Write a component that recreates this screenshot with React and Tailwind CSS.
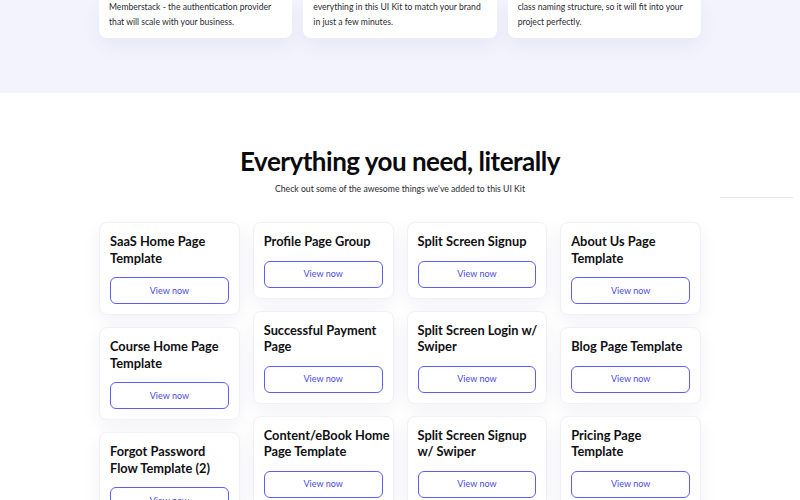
import { Fragment } from "react";

/* ---- feature blurbs (tail end of the previous section) ---- */
const features = [
  ["Memberstack - the authentication provider", "that will scale with your business."],
  ["everything in this UI Kit to match your brand", "in just a few minutes."],
  ["class naming structure, so it will fit into your", "project perfectly."],
];

/* ---- template cards, laid out column by column ---- */
const columns = [
  [
    ["SaaS Home Page", "Template"],
    ["Course Home Page", "Template"],
    ["Forgot Password", "Flow Template (2)"],
  ],
  [
    ["Profile Page Group"],
    ["Successful Payment", "Page"],
    ["Content/eBook Home", "Page Template"],
  ],
  [
    ["Split Screen Signup"],
    ["Split Screen Login w/", "Swiper"],
    ["Split Screen Signup", "w/ Swiper"],
  ],
  [
    ["About Us Page", "Template"],
    ["Blog Page Template"],
    ["Pricing Page", "Template"],
  ],
];

function TemplateCard({ lines }) {
  return (
    <div className="rounded-[8px] border border-[#f0f0f9] bg-white px-[10px] py-[10px] shadow-[0_6px_18px_rgba(40,40,110,0.06)]">
      <h3 className="text-[12.8px] font-bold leading-[16.5px] text-[#101014]">
        {lines.map((l, i) => (
          <Fragment key={i}>
            <span className="whitespace-nowrap">{l}</span>
            {i < lines.length - 1 && <br />}
          </Fragment>
        ))}
      </h3>
      <button
        type="button"
        className="mt-[11px] flex h-[27px] w-full items-center justify-center rounded-[6px] border-[1.5px] border-[#5c5ff3] bg-white text-[9px] text-[#4a4ade]"
      >
        View now
      </button>
    </div>
  );
}

export default function App() {
  return (
    <div className="min-h-[500px] bg-white font-['Lato',sans-serif] text-[#111]">
      {/* Features strip */}
      <section className="h-[93px] overflow-hidden bg-[#f3f3fd]">
        <div className="mx-auto grid w-[602px] grid-cols-3 gap-[11px]">
          {features.map((f, i) => (
            <div
              key={i}
              className="rounded-b-[8px] bg-white px-[10px] pb-[8px] shadow-[0_8px_18px_rgba(60,60,140,0.06)]"
            >
              {f.map((l, j) => (
                <p key={j} className="whitespace-nowrap text-[8.6px] leading-[15px] text-[#2a2a33]">
                  {l}
                </p>
              ))}
            </div>
          ))}
        </div>
      </section>

      {/* Templates */}
      <section className="relative pt-[53px]">
        <h2 className="text-center text-[26px] font-bold leading-[31px] tracking-[-0.5px] text-[#0b0b0f]">
          Everything you need, literally
        </h2>
        <p className="mt-[5px] text-center text-[8.7px] text-[#2a2a30]">
          Check out some of the awesome things we've added to this UI Kit
        </p>
        <span className="absolute left-[720px] top-[104px] h-px w-[73px] bg-[#e8e8ec]" />

        <div className="mx-auto mt-[27px] grid w-[602px] grid-cols-4 items-start gap-[13px]">
          {columns.map((col, i) => (
            <div key={i} className="flex flex-col gap-[12px]">
              {col.map((lines, j) => (
                <TemplateCard key={j} lines={lines} />
              ))}
            </div>
          ))}
        </div>
      </section>
    </div>
  );
}
